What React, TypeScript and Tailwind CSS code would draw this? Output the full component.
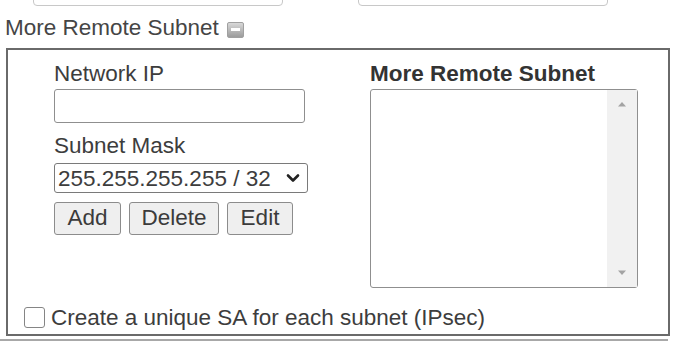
import React from 'react';

// --- small pieces ---
const CollapseIcon: React.FC = () => (
    <span className="ml-[8px] mt-[4px] inline-flex h-[16px] w-[17px] items-center justify-center rounded-[2px] border border-[#a0a0a0] bg-gradient-to-b from-[#d8d8d8] to-[#9c9c9c]">
        <span className="h-[3px] w-[9px] bg-white" />
    </span>
);

const Btn: React.FC<{ label: string; w: string }> = ({ label, w }) => (
    <button
        type="button"
        className={`h-[33px] ${w} rounded-[3px] border border-[#8c8c8c] bg-[#efefef] text-[22.5px] leading-none text-[#3b3b3b]`}
    >
        {label}
    </button>
);

const App: React.FC = () => {
    return (
        <div className="h-[344px] w-[678px] overflow-hidden bg-white font-['Liberation_Sans',Arial,sans-serif] text-[22.5px] leading-[25px] text-[#3d3d3d]">
            {/* bottoms of the inputs above, cut off by the window */}
            <div className="flex h-[7px] overflow-hidden">
                <div className="ml-[33px] mt-[-12px] h-[18px] w-[250px] rounded-[4px] border border-[#c8c8c8]" />
                <div className="ml-[75px] mt-[-12px] h-[18px] w-[250px] rounded-[4px] border border-[#c8c8c8]" />
            </div>

            <div className="flex h-[41px] items-center pl-[5px] text-[#454545]">
                <span>More Remote Subnet</span>
                <CollapseIcon />
            </div>

            <div className="ml-[6px] flex h-[288px] w-[664px] flex-col border-2 border-[#6a6a6a] pb-[4px]">
                <div className="flex">
                    {/* left column */}
                    <div className="ml-[46px] flex w-[316px] flex-col pt-[11px]">
                        <div>Network IP</div>
                        <input
                            type="text"
                            className="mt-[3px] h-[34px] w-[251px] rounded-[3px] border border-[#8f8f8f] bg-white px-1 outline-none"
                        />
                        <div className="mt-[10px]">Subnet Mask</div>
                        <div className="mt-[5px] flex h-[30px] w-[254px] items-center justify-between rounded-[3px] border border-[#7a7a7a] bg-white pl-[3px] pr-[7px]">
                            <span>255.255.255.255 / 32</span>
                            <svg width="14" height="10" viewBox="0 0 14 10" fill="none">
                                <path d="M2 2.5 L7 7.5 L12 2.5" stroke="#222" strokeWidth="2.6" strokeLinecap="round" strokeLinejoin="round" />
                            </svg>
                        </div>
                        <div className="mt-[9px] flex gap-[8px]">
                            <Btn label="Add" w="w-[67px]" />
                            <Btn label="Delete" w="w-[90px]" />
                            <Btn label="Edit" w="w-[66px]" />
                        </div>
                    </div>

                    {/* right column */}
                    <div className="flex flex-col pt-[11px]">
                        <div className="font-bold text-[#333]">More Remote Subnet</div>
                        <div className="mt-[3px] flex h-[199px] w-[268px] rounded-[3px] border border-[#8f8f8f] bg-white">
                            <div className="flex-1" />
                            <div className="flex w-[30px] flex-col items-center justify-between bg-[#f1f1f1] py-[11px]">
                                <svg width="10" height="6" viewBox="0 0 10 6">
                                    <path d="M1 5.5 L5 1 L9 5.5 Z" fill="#a3a3a3" />
                                </svg>
                                <svg width="10" height="6" viewBox="0 0 10 6">
                                    <path d="M1 0.5 L5 5 L9 0.5 Z" fill="#a3a3a3" />
                                </svg>
                            </div>
                        </div>
                    </div>
                </div>

                <label className="mt-auto ml-[16px] flex items-center gap-[6px]">
                    <span className="h-[21px] w-[21px] rounded-[3px] border border-[#858585] bg-white" />
                    <span>Create a unique SA for each subnet (IPsec)</span>
                </label>
            </div>

            <div className="mt-[3px] h-[2px] w-[668px] bg-[#a8a8a8]" />
        </div>
    );
};

export default App;
